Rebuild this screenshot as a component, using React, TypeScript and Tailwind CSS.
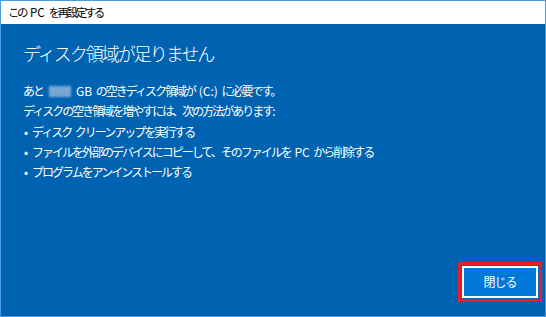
const font = { fontFamily: '"Noto Sans CJK JP", "Noto Sans", sans-serif' };

// Latin runs keep their normal letter spacing; only the kana/kanji are tightened
function L({ children }: { children: string }) {
  return <span className="tracking-normal">{children}</span>;
}

export default function App() {
  return (
    <div
      className="flex h-[317px] w-[546px] flex-col border border-[#4a9be3] bg-[#0063b1] text-white"
      style={font}
    >
      <div className="h-[23px] shrink-0 bg-white pl-[7px] text-[11.5px] leading-[23px] tracking-[-2.5px] text-black [word-spacing:4px]">
        この <L>PC</L> を再設定する
      </div>

      <div className="flex flex-1 flex-col">
        <div className="pl-[22px] pt-[15px]">
          <h1 className="text-[18px] font-light leading-[28px] tracking-[-2px]">
            ディスク領域が足りません
          </h1>

          <div className="mt-[14px] flex flex-col text-[12px] leading-[20px] tracking-[-2px] [word-spacing:3px]">
            <p>
              あと
              <span className="ml-[6px] mr-[5px] inline-block h-[11px] w-[22px] translate-y-[1px] bg-[#7aa6d6] blur-[1px]" />
              <L>GB</L> の空きディスク領域が <L>(C:)</L> に必要です。
            </p>
            <p>ディスクの空き領域を増やすには、次の方法があります:</p>
            <ul className="mt-[1px] flex flex-col">
              <li className="flex">
                <span className="w-[9px] pl-[1px]">•</span>
                <span>ディスク クリーンアップを実行する</span>
              </li>
              <li className="flex">
                <span className="w-[9px] pl-[1px]">•</span>
                <span>
                  ファイルを外部のデバイスにコピーして、そのファイルを <L>PC</L> から削除する
                </span>
              </li>
              <li className="flex">
                <span className="w-[9px] pl-[1px]">•</span>
                <span>プログラムをアンインストールする</span>
              </li>
            </ul>
          </div>
        </div>

        <div className="mt-auto flex justify-end pb-[14px] pr-[3px]">
          <div className="border-[3px] border-[#ed1c24] p-px">
            <button className="flex h-[32px] w-[76px] items-center justify-center border border-white bg-[#0078d7] text-[12px] tracking-[-1px] outline outline-1 -outline-offset-2 outline-white">
              閉じる
            </button>
          </div>
        </div>
      </div>
    </div>
  );
}
